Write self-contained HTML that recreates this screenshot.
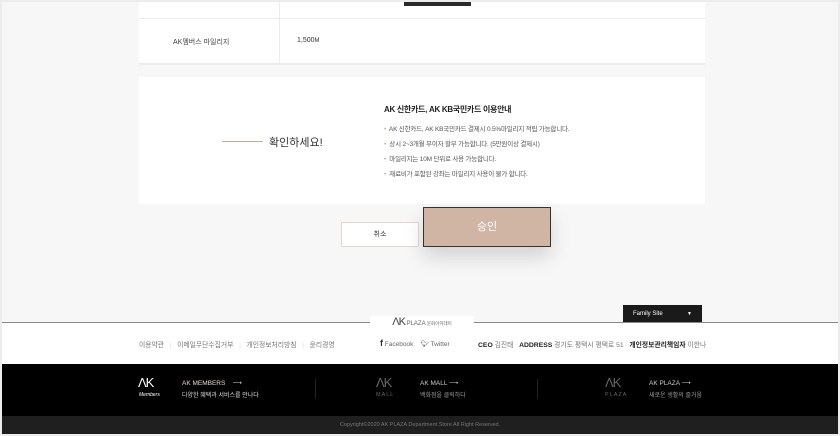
<!DOCTYPE html>
<html><head><meta charset="utf-8"><style>
*{margin:0;padding:0;box-sizing:border-box}
body{width:840px;height:436px;background:#ececec;font-family:"Liberation Sans","Noto Sans CJK KR",sans-serif;position:relative;overflow:hidden;color:#333}
.frame{position:absolute;left:2px;top:2px;width:836px;height:432px;background:#f7f7f7;overflow:hidden}
.abs{position:absolute}
.t{font-size:7px;white-space:nowrap}
</style></head><body>
<div class="frame">
 <div class="abs" style="left:137px;top:0;width:566px;height:62px;background:#fff"></div>
 <div class="abs" style="left:402px;top:0;width:67px;height:4px;background:#2a2a2a;z-index:2"></div>
 <div class="abs" style="left:137px;top:16px;width:566px;height:1px;background:#ededed"></div>
 <div class="abs" style="left:137px;top:61px;width:566px;height:2px;background:#ececec"></div>
 <div class="abs" style="left:277px;top:0;width:1px;height:61px;background:#ececec"></div>
 <div class="abs t" style="left:171px;top:35px;color:#444">AK멤버스 마일리지</div>
 <div class="abs t" style="left:295px;top:35px;color:#333">1,500<span style="font-size:6px">M</span></div>

 <div class="abs" style="left:137px;top:75px;width:566px;height:127px;background:#fff"></div>
 <div class="abs" style="left:220px;top:139px;width:41px;height:1px;background:#c9ab98"></div>
 <div class="abs" style="left:267px;top:132px;font-size:11px;color:#333">확인하세요!</div>
 <div class="abs" style="left:382px;top:102px;font-size:8px;font-weight:bold;color:#222;letter-spacing:-0.3px">AK 신한카드, AK KB국민카드 이용안내</div>
 <div class="abs t" style="left:382px;top:121px;color:#555;font-size:6.5px;letter-spacing:-0.2px"><span style="color:#c9ab98">•</span>&nbsp; AK 신한카드, AK KB국민카드 결제시 0.5%마일리지 적립 가능합니다.</div>
 <div class="abs t" style="left:382px;top:136px;color:#555;font-size:6.5px;letter-spacing:-0.2px"><span style="color:#c9ab98">•</span>&nbsp; 상시 2~3개월 무이자 할부 가능합니다. (5만원이상 결제시)</div>
 <div class="abs t" style="left:382px;top:151px;color:#555;font-size:6.5px;letter-spacing:-0.2px"><span style="color:#c9ab98">•</span>&nbsp; 마일리지는 10M 단위로 사용 가능합니다.</div>
 <div class="abs t" style="left:382px;top:166px;color:#555;font-size:6.5px;letter-spacing:-0.2px"><span style="color:#c9ab98">•</span>&nbsp; 재료비가 포함된 강좌는 마일리지 사용이 불가 합니다.</div>

 <div class="abs" style="left:339px;top:220px;width:78px;height:25px;background:#fff;border:1px solid #e6d6cc;font-size:7px;text-align:center;line-height:23px">취소</div>
 <div class="abs" style="left:421px;top:205px;width:128px;height:40px;background:#d0b5a5;border:1px solid #333;box-shadow:0 10px 20px rgba(0,0,0,.15);color:#fff;font-size:11px;text-align:center;line-height:38px">승인</div>

 <div class="abs" style="left:621px;top:303px;width:79px;height:18px;background:#1a1a1a;color:#fff;font-size:6px;line-height:18px;padding-left:10px">Family Site<span style="position:absolute;right:10px;font-size:5px">▼</span></div>
 <div class="abs" style="left:0;top:320px;width:836px;height:42px;background:#fff"></div>
 <div class="abs" style="left:0;top:320px;width:836px;height:1px;background:#888"></div>
 <div class="abs" style="left:368px;top:314px;width:104px;height:12px;background:#fff;font-size:6px;color:#666;text-align:center;line-height:12px"><span style="font-size:11px;letter-spacing:-1px;color:#444">ΛK</span> PLAZA <span style="font-size:4.5px">문화아카데미</span></div>
 <div class="abs t" style="left:137px;top:337px;font-size:6.8px;color:#777">이용약관 &nbsp;&nbsp;<span style="color:#ddd">|</span>&nbsp;&nbsp; 이메일무단수집거부 &nbsp;&nbsp;<span style="color:#ddd">|</span>&nbsp;&nbsp; 개인정보처리방침 &nbsp;&nbsp;<span style="color:#ddd">|</span>&nbsp;&nbsp; 윤리경영</div>
 <div class="abs t" style="left:378px;top:336px;font-size:6.5px;color:#666"><b style="font-size:9px;color:#333">f</b> Facebook &nbsp;&nbsp; <span style="color:#333">🐦︎</span> Twitter</div>
 <div class="abs t" style="left:476px;top:337px;font-size:6.8px;color:#777"><b style="color:#222">CEO</b> 김진태 &nbsp; <b style="color:#222">ADDRESS</b> 경기도 평택시 평택로 51 &nbsp; <b style="color:#222">개인정보관리책임자</b> 이한나</div>

 <div class="abs" style="left:0;top:362px;width:836px;height:52px;background:#000"></div>
 <div class="abs" style="left:313px;top:377px;width:1px;height:20px;background:#222"></div>
 <div class="abs" style="left:535px;top:377px;width:1px;height:20px;background:#222"></div>
 <div class="abs" style="left:136px;top:373px;color:#fff;font-size:13px;letter-spacing:-1px">ΛK</div>
 <div class="abs t" style="left:137px;top:390px;color:#fff;font-size:5px;font-style:italic">Members</div>
 <div class="abs t" style="left:180px;top:377px;color:#e8d8c8;font-size:6.5px">AK MEMBERS &nbsp;&nbsp;&nbsp;⟶</div>
 <div class="abs t" style="left:180px;top:388px;color:#ddd;font-size:6px">다양한 혜택과 서비스를 만나다</div>
 <div class="abs" style="left:374px;top:373px;color:#666;font-size:13px;letter-spacing:-1px">ΛK</div>
 <div class="abs t" style="left:374px;top:390px;color:#666;font-size:5.5px;letter-spacing:1px">MALL</div>
 <div class="abs t" style="left:418px;top:377px;color:#ccc;font-size:6.5px">AK MALL ⟶</div>
 <div class="abs t" style="left:418px;top:388px;color:#999;font-size:6px">백화점을 클릭하다</div>
 <div class="abs" style="left:603px;top:373px;color:#666;font-size:13px;letter-spacing:-1px">ΛK</div>
 <div class="abs t" style="left:603px;top:390px;color:#666;font-size:5.5px;letter-spacing:1px">PLAZA</div>
 <div class="abs t" style="left:647px;top:377px;color:#ccc;font-size:6.5px">AK PLAZA ⟶</div>
 <div class="abs t" style="left:647px;top:388px;color:#999;font-size:6px">새로운 생활의 즐거움</div>
 <div class="abs" style="left:0;top:414px;width:836px;height:18px;background:#1f1f1f;color:#777;font-size:5.5px;text-align:center;line-height:18px">Copyright©2020 AK PLAZA Department Store All Right Reserved.</div>
</div>
</body></html>
